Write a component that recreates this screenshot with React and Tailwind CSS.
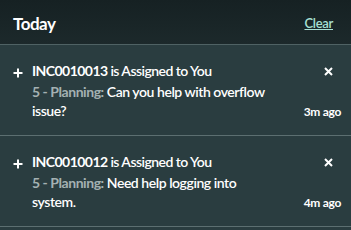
import React from "react";

const items = [
  { id: "INC0010013", msg: "Can you help with overflow issue?", time: "3m ago" },
  { id: "INC0010012", msg: "Need help logging into system.", time: "4m ago" },
];

function Plus() {
  return (
    <svg width="10" height="10" viewBox="0 0 10 10" className="block">
      <path d="M5 0.5V9.5M0.5 5H9.5" stroke="#fff" strokeWidth="2" />
    </svg>
  );
}

function Cross() {
  return (
    <svg width="9" height="9" viewBox="0 0 9 9" className="block">
      <path d="M1 1L8 8M8 1L1 8" stroke="#fff" strokeWidth="2" />
    </svg>
  );
}

export default function App() {
  return (
    <div
      className="w-[351px] h-[230px] bg-[#2a3d40] text-white overflow-hidden"
      style={{ fontFamily: "Lato, 'Noto Sans', sans-serif" }}
    >
      <div className="h-[45px] bg-gradient-to-b from-[#162123] to-[#1c292b] border-b border-[#4f6264] flex items-center justify-between pl-[13px] pr-[18px]">
        <span className="text-[17px] font-bold leading-none pt-[3px] tracking-[-0.5px]">Today</span>
        <a className="text-[13px] font-semibold text-[#a8e0d4] underline leading-none pt-[3px] tracking-[-0.3px]">Clear</a>
      </div>
      {items.map((it) => (
        <div key={it.id} className="h-[91px] border-b border-[#5c6f71] flex pl-[13px] pr-[10px] pt-[16px]">
          <div className="w-[19px] pt-[7px]">
            <Plus />
          </div>
          <div className="flex-1">
            <div className="flex items-start justify-between">
              <div className="text-[14px] font-bold leading-[19px] tracking-[-0.55px]">
                {it.id} <span className="font-semibold">is Assigned to You</span>
              </div>
              <div className="pt-[6px] pr-[8px]">
                <Cross />
              </div>
            </div>
            <div className="flex items-end justify-between">
              <div className="text-[14px] font-semibold leading-[19px] w-[250px] pt-[2px] tracking-[-0.45px]">
                <span className="text-[#a4b1b2] font-bold">5 - Planning:</span> {it.msg}
              </div>
              <div className="text-[12px] font-bold leading-[16px] tracking-[-0.3px]">{it.time}</div>
            </div>
          </div>
        </div>
      ))}
    </div>
  );
}
